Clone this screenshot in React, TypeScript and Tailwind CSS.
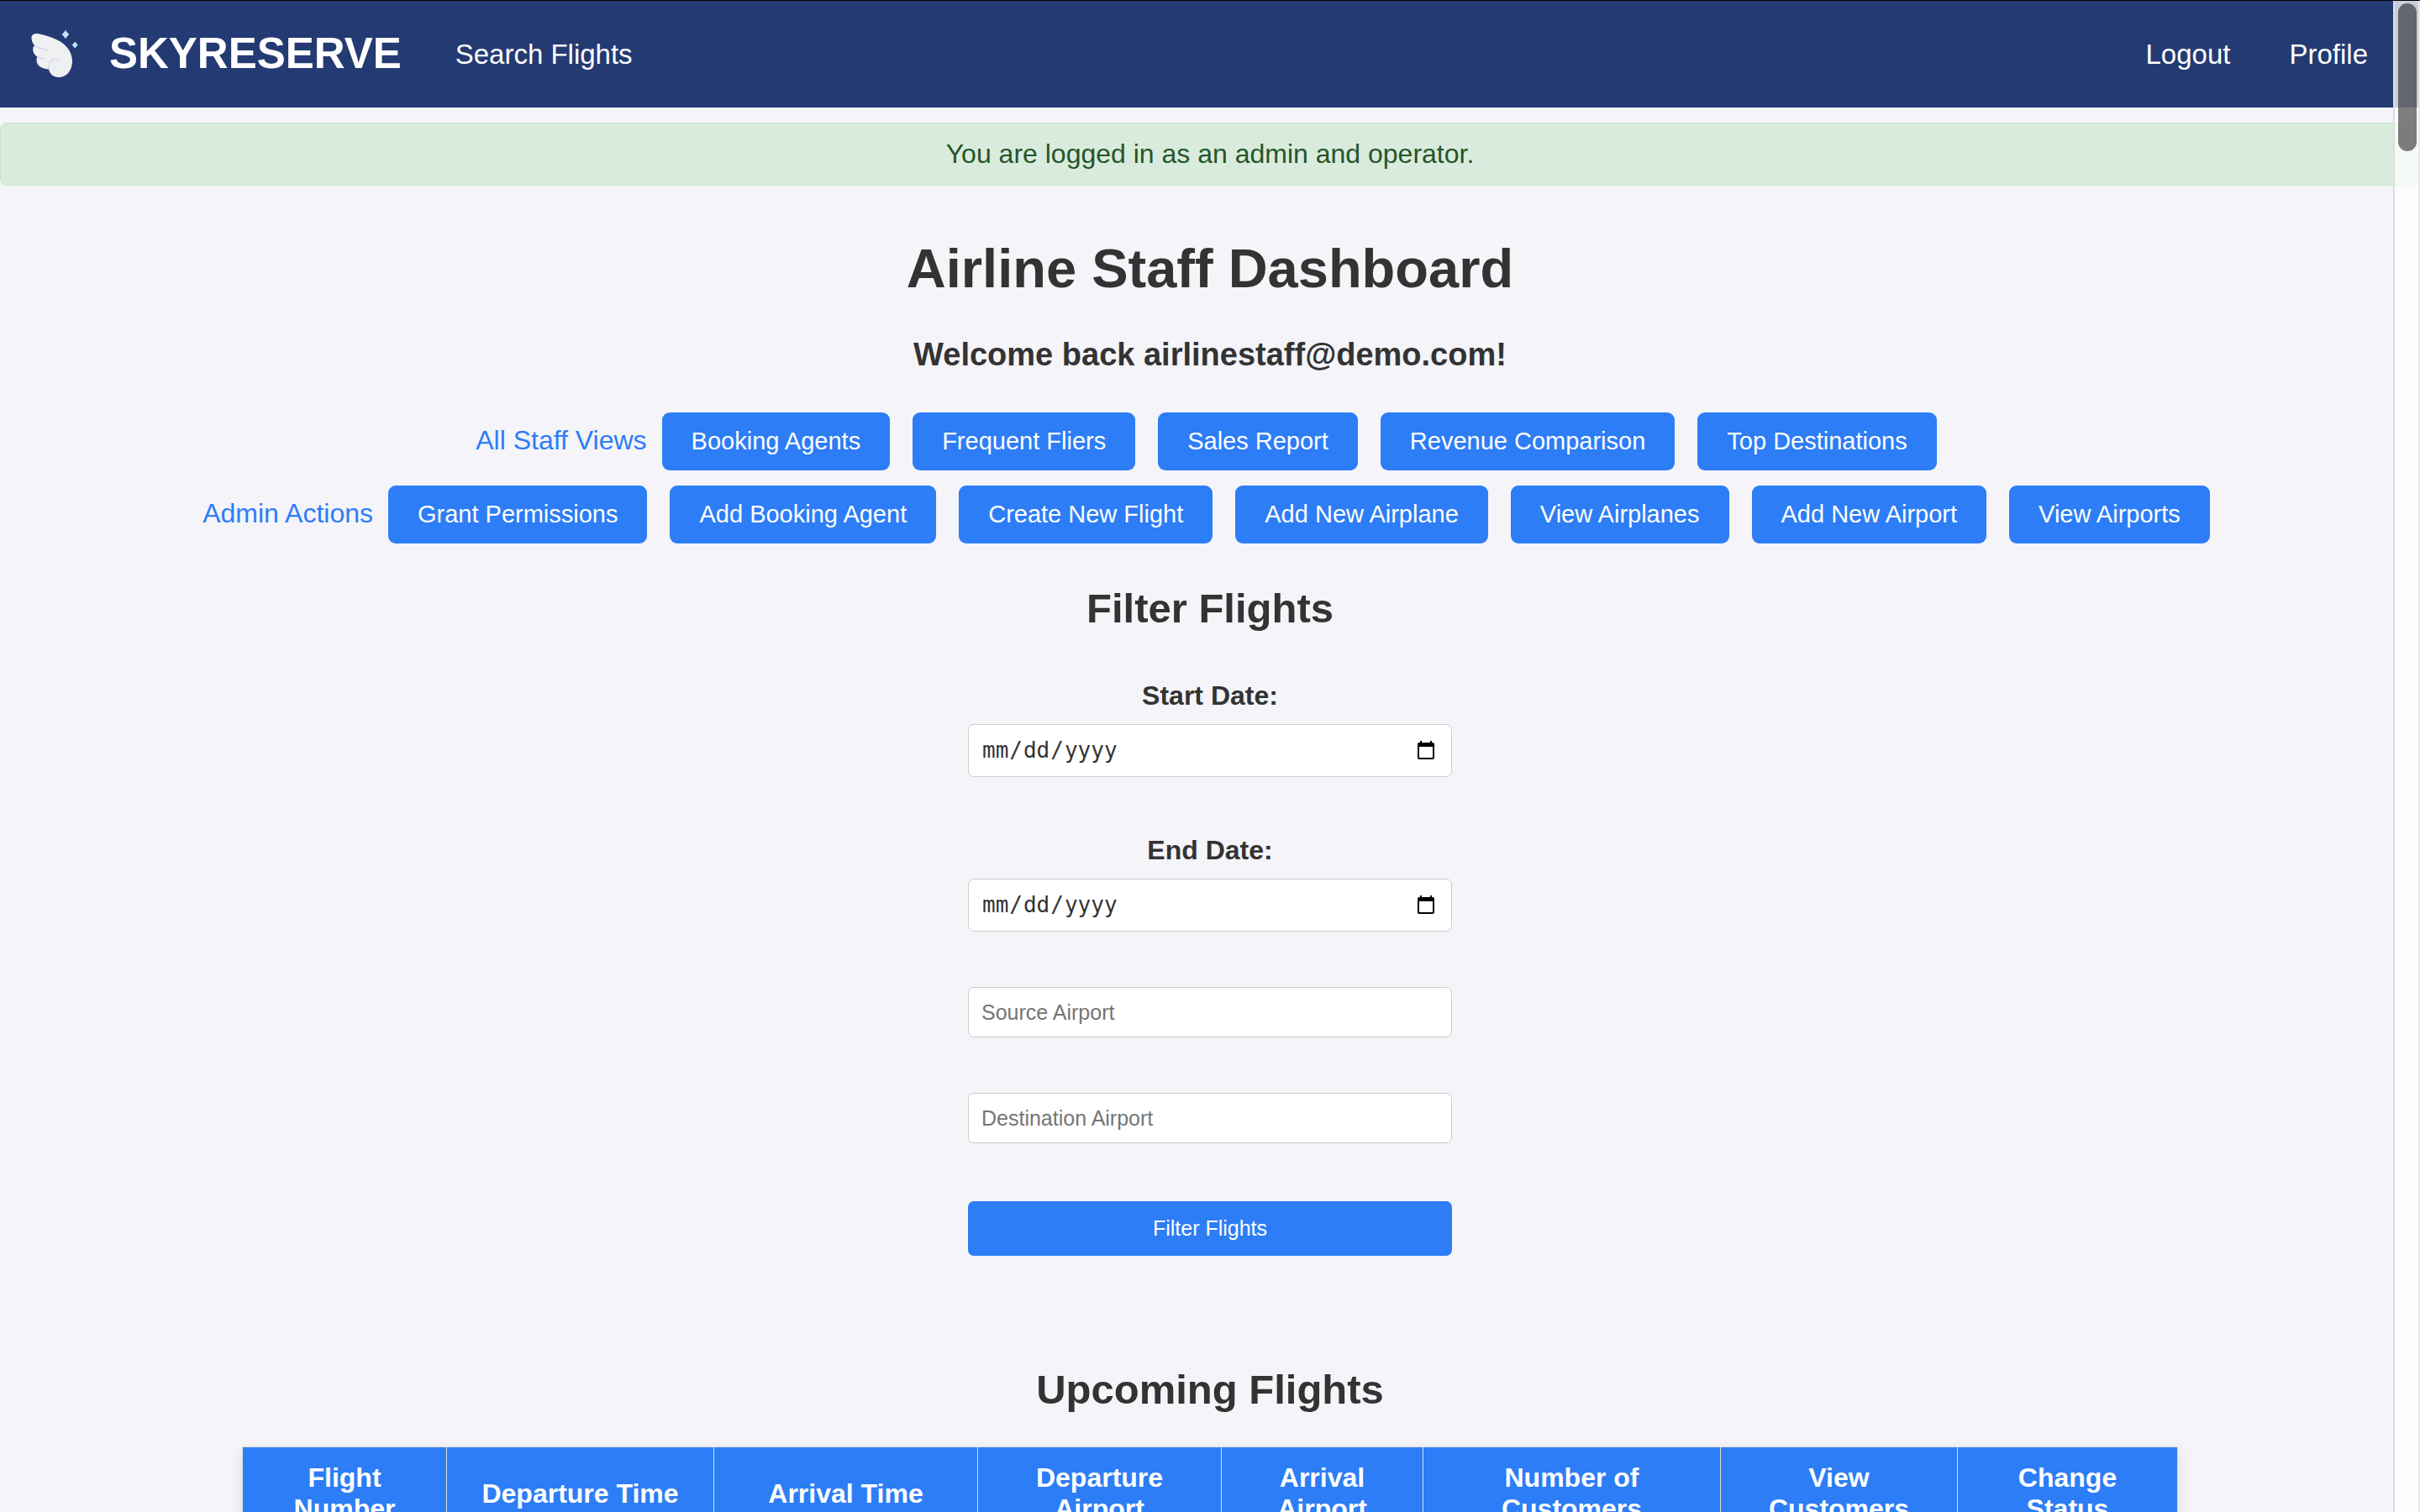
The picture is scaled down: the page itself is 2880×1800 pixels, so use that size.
import React from "react";

const staffViews = [
  "Booking Agents",
  "Frequent Fliers",
  "Sales Report",
  "Revenue Comparison",
  "Top Destinations",
];

const adminActions = [
  "Grant Permissions",
  "Add Booking Agent",
  "Create New Flight",
  "Add New Airplane",
  "View Airplanes",
  "Add New Airport",
  "View Airports",
];

const columns = [
  { title: "Flight Number", width: "w-[243px]" },
  { title: "Departure Time", width: "w-[318px]" },
  { title: "Arrival Time", width: "w-[314px]" },
  { title: "Departure Airport", width: "w-[290px]" },
  { title: "Arrival Airport", width: "w-[240px]" },
  { title: "Number of Customers", width: "w-[354px]" },
  { title: "View Customers", width: "w-[282px]" },
  { title: "Change Status", width: "w-[262px]" },
];

const fieldClass =
  "block w-full rounded-[7px] border border-[#cccccc] bg-white px-[15px] placeholder:text-[#757575]";

function WingLogo() {
  return (
    <svg viewBox="0 0 90 90" className="h-[90px] w-[90px]" aria-hidden="true">
      <path
        d="M17.5 25C17.3 21.5 20.5 19.8 25 20C34 21.5 43 25 49 28C59 33 66 42 66 53C66 64 59 72 50 72C43.500 72 39 68 38 62.500C31 62 23 59 23.500 50.500C23.500 49.500 24 48.500 24.500 47.500C20.500 45.500 18.500 41 19.500 36.500C19.800 35.500 20.300 34.800 21 34C18.800 31.500 17.600 28.500 17.500 25Z"
        fill="#eff0f2"
      />
      <path
        d="M22 34.500C26 37 31 38.500 36 39.500M25 47.700C28 49.200 30.500 49.800 33.500 50M38.500 62C37 55 41 50.500 45 50.500C47 50.300 48.500 50.700 50 51.500"
        fill="none"
        stroke="#d5dbe1"
        strokeWidth="1.600"
        strokeLinecap="round"
      />
      <path
        d="M58 16.500Q59.800 19.200 61.800 21Q59.800 22.800 58 25.500Q56.200 22.800 54.200 21Q56.200 19.200 58 16.500ZM69.200 30Q70.800 32.200 72.300 33.500Q70.800 34.800 69.200 37Q67.600 34.800 66.100 33.500Q67.600 32.200 69.200 30Z"
        fill="#bde3ff"
        stroke="#bde3ff"
        strokeWidth="1"
        strokeLinejoin="round"
      />
    </svg>
  );
}

function ActionRow({ label, actions }: { label: string; actions: string[] }) {
  return (
    <div className="flex items-baseline justify-center gap-[18px] pr-[9px]">
      <span className="text-[32px] leading-[37px] text-[#2d7df6]">{label}</span>
      <div className="flex gap-[27px]">
        {actions.map((action) => (
          <button
            key={action}
            type="button"
            className="rounded-[9px] bg-[#2d7df6] px-[35px] py-[18px] text-[29px] leading-[33px] whitespace-nowrap text-white"
          >
            {action}
          </button>
        ))}
      </div>
    </div>
  );
}

function DateField({ id, label }: { id: string; label: string }) {
  return (
    <div className="flex flex-col gap-[15px] pt-[3px]">
      <label htmlFor={id} className="text-center text-[32px] leading-[37px] font-bold">
        {label}
      </label>
      <input
        id={id}
        type="date"
        className={`${fieldClass} h-[63px] font-['DejaVu_Sans_Mono',monospace] text-[26px]`}
      />
    </div>
  );
}

function Scrollbar() {
  return (
    <div
      aria-hidden="true"
      className="fixed top-px right-0 bottom-0 w-8 border-r-2 border-l-2 border-r-[#e8e8e8] border-l-[#dedede] bg-white/75 bg-clip-padding pt-[3px] pl-1"
    >
      <div className="h-[176px] w-[22px] rounded-full bg-black/50" />
    </div>
  );
}

export default function App() {
  return (
    <div className="h-screen overflow-hidden bg-[#f4f4f9] font-['Liberation_Sans',Arial,sans-serif] text-[#333333]">
      <header className="flex h-32 items-center justify-between border-t border-black bg-[#243a72] pr-[62px] pl-5 text-[33px] text-white">
        <div className="flex items-center gap-[64px]">
          <a href="#home" className="flex items-center gap-5 text-[51px] font-bold">
            <WingLogo />
            SKYRESERVE
          </a>
          <a href="#search">Search Flights</a>
        </div>
        <nav className="flex gap-[70px]">
          <a href="#logout">Logout</a>
          <a href="#profile">Profile</a>
        </nav>
      </header>

      <div
        role="status"
        className="mt-[18px] rounded-[8px] border border-[#c7e5cd] bg-[#d9ebdc] py-[18px] text-center text-[32px] leading-[37px] text-[#26552a]"
      >
        You are logged in as an admin and operator.
      </div>

      <main className="flex flex-col items-center">
        <h1 className="mt-[61px] text-[65px] leading-[75px] font-bold">Airline Staff Dashboard</h1>
        <h3 className="mt-[43px] text-[38px] leading-[44px] font-bold">
          Welcome back airlinestaff@demo.com!
        </h3>

        <div className="mt-[47px] flex flex-col gap-[18px]">
          <ActionRow label="All Staff Views" actions={staffViews} />
          <ActionRow label="Admin Actions" actions={adminActions} />
        </div>

        <h2 className="mt-[49px] text-[49px] leading-[56px] font-bold">Filter Flights</h2>
        <form className="mt-[55px] flex w-1/5 flex-col gap-[66px]">
          <DateField id="start-date" label="Start Date:" />
          <DateField id="end-date" label="End Date:" />
          <input
            type="text"
            aria-label="Source Airport"
            placeholder="Source Airport"
            className={`${fieldClass} h-[60px] text-[25px]`}
          />
          <input
            type="text"
            aria-label="Destination Airport"
            placeholder="Destination Airport"
            className={`${fieldClass} h-[60px] text-[25px]`}
          />
          <button
            type="button"
            className="mt-[3px] h-[65px] rounded-[7px] bg-[#2d7df6] text-[25px] text-white"
          >
            Filter Flights
          </button>
        </form>

        <h2 className="mt-[131px] text-[49px] leading-[56px] font-bold">Upcoming Flights</h2>
        <table className="mt-[40px] w-4/5 table-fixed border-collapse shadow-[0_7px_18px_rgba(0,0,0,0.1)]">
          <colgroup>
            {columns.map((column) => (
              <col key={column.title} className={column.width} />
            ))}
          </colgroup>
          <thead>
            <tr>
              {columns.map((column) => (
                <th
                  key={column.title}
                  scope="col"
                  className="border border-[#dddddd] bg-[#2d7df6] px-8 py-[18px] text-center text-[32px] leading-[37px] font-bold text-white"
                >
                  {column.title}
                </th>
              ))}
            </tr>
          </thead>
        </table>
      </main>

      <Scrollbar />
    </div>
  );
}
